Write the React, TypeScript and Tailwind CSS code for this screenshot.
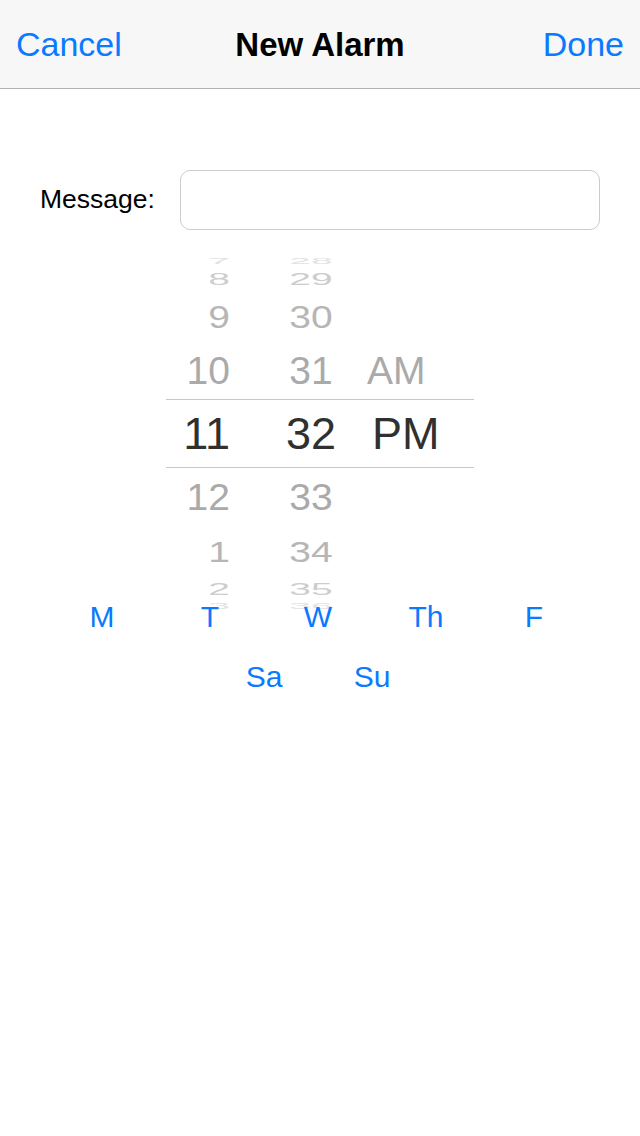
import React from "react";

type Row = {
  h: number;
  hour: string;
  minute: string;
  ampm?: string;
  scale: number;
  color: string;
  selected?: boolean;
};

const rows: Row[] = [
  { h: 10, hour: "7", minute: "28", scale: 0.22, color: "text-[#e2e2e2]" },
  { h: 26, hour: "8", minute: "29", scale: 0.43, color: "text-[#cdcdcd]" },
  { h: 49, hour: "9", minute: "30", scale: 0.82, color: "text-[#b6b6b6]" },
  { h: 58, hour: "10", minute: "31", ampm: "AM", scale: 1, color: "text-[#aaaaaa]" },
  { h: 69, hour: "11", minute: "32", ampm: "PM", scale: 1, color: "text-[#303030]", selected: true },
  { h: 57, hour: "12", minute: "33", scale: 0.97, color: "text-[#aaaaaa]" },
  { h: 52, hour: "1", minute: "34", scale: 0.75, color: "text-[#b6b6b6]" },
  { h: 24, hour: "2", minute: "35", scale: 0.43, color: "text-[#cdcdcd]" },
  { h: 11, hour: "3", minute: "36", scale: 0.22, color: "text-[#e2e2e2]" },
];

const days = ["M", "T", "W", "Th", "F", "Sa", "Su"];

function PickerRow({ row }: { row: Row }) {
  const size = row.selected ? "text-[45px]" : "text-[39px]";
  const glyph = { transform: `scaleY(${row.scale})` };
  return (
    <div
      className={`flex items-center ${row.color} ${
        row.selected ? "border-y border-[#c8c8c8]" : ""
      }`}
      style={{ height: row.h }}
    >
      <div className="w-[64px] flex justify-end">
        <span className={`${size} leading-none inline-block`} style={glyph}>
          {row.hour}
        </span>
      </div>
      <div className="w-[98px] ml-[32px] flex justify-center">
        <span className={`${size} leading-none inline-block`} style={glyph}>
          {row.minute}
        </span>
      </div>
      <div className={`${row.selected ? "ml-[12px]" : "ml-[7px]"} flex`}>
        {row.ampm && (
          <span className={`${size} leading-none inline-block`} style={glyph}>
            {row.ampm}
          </span>
        )}
      </div>
    </div>
  );
}

export default function App() {
  return (
    <div className="w-[640px] h-[1136px] bg-white font-['Liberation_Sans',Arial,sans-serif] overflow-hidden">
      {/* Navigation bar */}
      <div className="h-[89px] bg-[#f7f7f7] border-b border-[#b2b2b2] grid grid-cols-[1fr_auto_1fr] items-center px-[16px]">
        <button className="justify-self-start text-[34px] text-[#0a7aff] leading-none">Cancel</button>
        <span className="text-[33px] font-bold text-black leading-none">New Alarm</span>
        <button className="justify-self-end text-[34px] text-[#0a7aff] leading-none">Done</button>
      </div>

      {/* Message field */}
      <div className="mt-[81px] flex items-center pl-[40px] pr-[40px]">
        <span className="text-[26.5px] text-black w-[140px]">Message:</span>
        <input
          type="text"
          className="flex-1 h-[60px] rounded-[10px] border border-[#cccccc] bg-white outline-none px-3"
        />
      </div>

      {/* Time picker */}
      <div className="mt-[26px] mx-auto w-[308px] h-[356px] overflow-hidden flex flex-col">
        {rows.map((row) => (
          <PickerRow key={row.hour} row={row} />
        ))}
      </div>

      {/* Repeat days */}
      <div className="relative -mt-[25px] ml-[48px] w-[540px] flex flex-wrap justify-center">
        {days.map((d) => (
          <button
            key={d}
            className="w-[108px] h-[60px] flex items-center justify-center text-[30px] text-[#0a7aff] leading-none"
          >
            {d}
          </button>
        ))}
      </div>
    </div>
  );
}
